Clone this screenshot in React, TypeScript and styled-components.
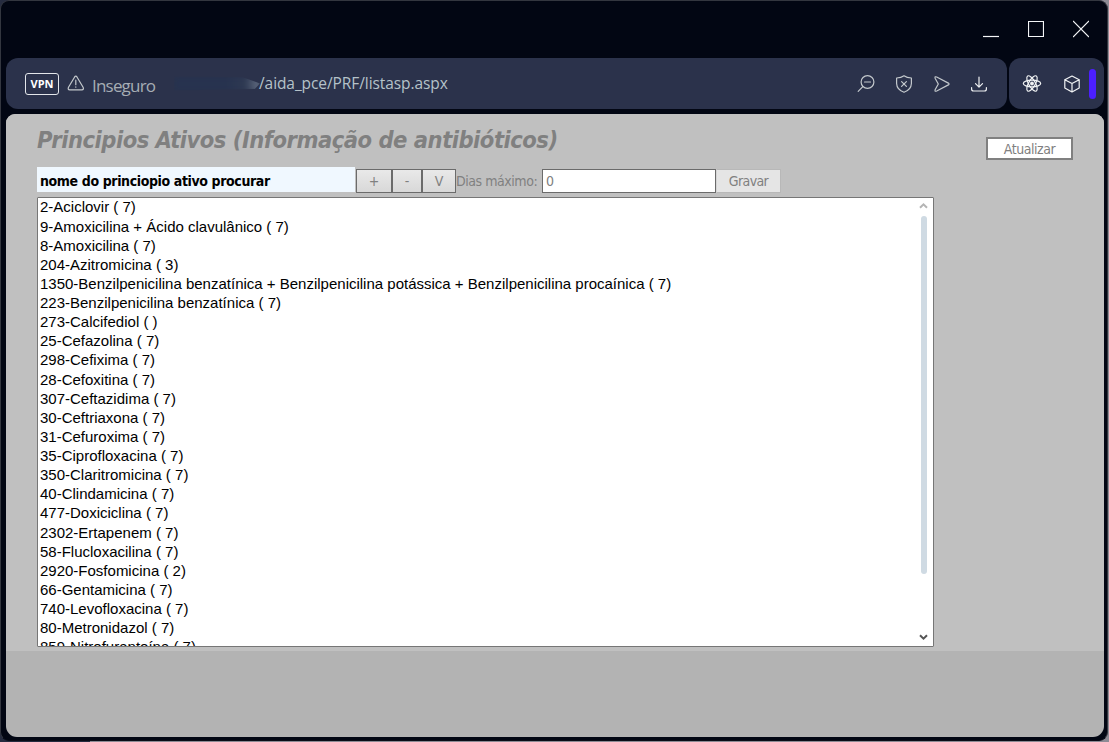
import React from "react";
import styled, { createGlobalStyle } from "styled-components";

const GlobalStyle = createGlobalStyle`
  * { box-sizing: border-box; }
  html, body { margin: 0; padding: 0; height: 100%; overflow: hidden; background: #343743; }
  button, input { font: inherit; margin: 0; border-radius: 0; outline: none; }
`;

const Desktop = styled.div`
  width: 1109px;
  height: 742px;
  padding: 0 1px 1px 0;
  background: linear-gradient(90deg, #262c40 0 90px, #8d8b95 90px);
`;

const Window = styled.div`
  display: flex;
  flex-direction: column;
  width: 1108px;
  height: 741px;
  padding: 0 3px 3px 5px;
  background: #020613;
  border: 1px solid #33363f;
  border-bottom-color: #0a0d18;
  border-radius: 9px;
`;

const TitleBar = styled.header`
  display: flex;
  justify-content: flex-end;
  align-items: center;
  gap: 29px;
  height: 57px;
  padding: 0 15px 2px 0;
  flex: none;
`;

const WindowIcon = styled.svg`
  width: 16px;
  height: 18px;
  fill: none;
  stroke: #f4f5f7;
  stroke-width: 1.2;
`;

const Bars = styled.div`
  display: flex;
  gap: 2px;
  height: 51px;
  margin-bottom: 5px;
  flex: none;
`;

const Bar = styled.div<{ $grow?: boolean }>`
  display: flex;
  align-items: center;
  flex: ${(p) => (p.$grow ? "1" : "0 0 95px")};
  padding: ${(p) => (p.$grow ? "0 18px 0 19px" : "0 8px 0 13px")};
  background: #2b324b;
  border-radius: 12px;
`;

const Vpn = styled.span`
  display: flex;
  align-items: center;
  justify-content: center;
  width: 34px;
  height: 22px;
  border: 1px solid #e3e6ea;
  border-radius: 3px;
  color: #fff;
  font: 700 11px "Open Sans", sans-serif;
`;

const LineIcon = styled.svg<{ $color?: string }>`
  width: 20px;
  height: 20px;
  flex: none;
  fill: none;
  stroke: ${(p) => p.$color ?? "#c3c8cc"};
  stroke-width: 1.2;
  stroke-linecap: round;
  stroke-linejoin: round;
`;

const WarningIcon = styled(LineIcon)`
  margin-left: 7px;
`;

const CubeIcon = styled(LineIcon)`
  margin-left: 20px;
`;

const Insecure = styled.span`
  width: 82px;
  margin-left: 6px;
  padding-top: 4px;
  color: #a6adb4;
  font: 17px/24px "Open Sans", sans-serif;
  letter-spacing: -0.8px;
`;

const HiddenHost = styled.span`
  width: 86px;
  height: 14px;
  margin-right: -1px;
  background: linear-gradient(90deg, #27334f 0 60%, #2e3952 82%, #626d81 100%);
  filter: blur(2px);
  clip-path: polygon(0 0, 80% 5%, 100% 50%, 94% 90%, 0 100%);
`;

const Url = styled.span`
  padding-bottom: 1px;
  color: #b5c2c9;
  font: 15.5px/24px "Open Sans", sans-serif;
  letter-spacing: -0.08px;
`;

const Actions = styled.div`
  display: flex;
  gap: 17.6px;
  margin-left: auto;
`;

const Indicator = styled.i`
  width: 7px;
  height: 30px;
  margin-left: 7px;
  border-radius: 4px;
  background: #4c1fff;
`;

const Page = styled.main`
  display: flex;
  flex-direction: column;
  flex: 1;
  min-height: 0;
  border-radius: 9px 9px 11px 11px;
  overflow: hidden;
  background: #b3b3b3;
  font-family: "DejaVu Sans Condensed", "DejaVu Sans", sans-serif;
  font-stretch: condensed;
`;

const Form = styled.section`
  height: 537px;
  padding: 12px 31px 0;
  background: #c0c0c0;
`;

const Heading = styled.div`
  display: flex;
  justify-content: space-between;
  height: 41px;
`;

const Title = styled.h1`
  margin: 0;
  color: #808080;
  font-size: 23.5px;
  line-height: 28px;
  font-style: italic;
  font-weight: 700;
  letter-spacing: -0.5px;
  white-space: nowrap;
`;

const Refresh = styled.button`
  width: 87px;
  height: 23px;
  margin-top: 11px;
  padding: 0;
  border: 2px solid #808080;
  background: #fff;
  color: #808080;
  font-size: 14px;
  letter-spacing: -0.45px;
`;

const Controls = styled.div`
  display: flex;
  align-items: flex-end;
  height: 26px;
  margin-bottom: 4px;
`;

const Search = styled.input`
  width: 318px;
  height: 25px;
  margin: 0 1px 1px 0;
  padding: 3px 3px 0;
  border: 0;
  background: #f0f8ff;
  color: #000;
  font-size: 14px;
  font-weight: 700;
  letter-spacing: -0.38px;
`;

const Tool = styled.button<{ $width: number }>`
  width: ${(p) => p.$width}px;
  height: 24px;
  padding: 0;
  border: 1px solid #6b6b6b;
  background: linear-gradient(#e9e9e9, #d8d8d8);
  color: #808080;
  font-size: 14px;
`;

const Label = styled.label`
  width: 86px;
  color: #808080;
  font-size: 14px;
  line-height: 23px;
  letter-spacing: -0.45px;
  white-space: nowrap;
`;

const Days = styled.input`
  width: 174px;
  height: 24px;
  padding: 1px 3px;
  border: 1px solid #6b6b6b;
  background: #fff;
  color: #808080;
  font-size: 14px;
`;

const Save = styled.button`
  width: 65px;
  height: 24px;
  padding: 0;
  border: 1px solid #b8b8b8;
  border-left-color: #d5d5d5;
  background: #e5e5e5;
  color: #808080;
  font-size: 14px;
  letter-spacing: -0.6px;
`;

const ListBox = styled.div`
  display: flex;
  justify-content: space-between;
  width: 897px;
  height: 450px;
  border: 1px solid #767676;
  border-radius: 1px;
  background: #fff;
  overflow: hidden;
`;

const Options = styled.ul`
  margin: -0.57px 0 0;
  padding: 0 0 0 2px;
  list-style: none;
  color: #000;
  font: 15px/19.125px "Liberation Sans", Arial, sans-serif;
  white-space: pre;
`;

const Scrollbar = styled.div`
  display: flex;
  flex-direction: column;
  align-items: center;
  width: 18px;
  padding: 4px 1px 5px 0;
`;

const Arrow = styled.svg<{ $color: string }>`
  width: 9px;
  height: 8px;
  flex: none;
  fill: none;
  stroke: ${(p) => p.$color};
  stroke-width: 2;
`;

const Thumb = styled.i`
  width: 6px;
  height: 358px;
  margin: 6px 0 auto 1px;
  border-radius: 3px;
  background: #cfdae3;
`;

const items = [
  "2-Aciclovir ( 7)",
  "9-Amoxicilina + Ácido clavulânico ( 7)",
  "8-Amoxicilina ( 7)",
  "204-Azitromicina ( 3)",
  "1350-Benzilpenicilina benzatínica + Benzilpenicilina potássica + Benzilpenicilina procaínica ( 7)",
  "223-Benzilpenicilina benzatínica ( 7)",
  "273-Calcifediol ( )",
  "25-Cefazolina ( 7)",
  "298-Cefixima ( 7)",
  "28-Cefoxitina ( 7)",
  "307-Ceftazidima ( 7)",
  "30-Ceftriaxona ( 7)",
  "31-Cefuroxima ( 7)",
  "35-Ciprofloxacina ( 7)",
  "350-Claritromicina ( 7)",
  "40-Clindamicina ( 7)",
  "477-Doxiciclina ( 7)",
  "2302-Ertapenem ( 7)",
  "58-Flucloxacilina ( 7)",
  "2920-Fosfomicina ( 2)",
  "66-Gentamicina ( 7)",
  "740-Levofloxacina ( 7)",
  "80-Metronidazol ( 7)",
  "859-Nitrofurantoína ( 7)",
];

export default function App() {
  return (
    <Desktop>
      <GlobalStyle />
      <Window>
        <TitleBar>
          <WindowIcon viewBox="0 0 16 18"><path d="M0 16.5h16" /></WindowIcon>
          <WindowIcon viewBox="0 0 16 18"><path d="M.5 1.5h15v15H.5z" /></WindowIcon>
          <WindowIcon viewBox="0 0 16 18"><path d="M0 1l16 16M16 1L0 17" /></WindowIcon>
        </TitleBar>
        <Bars>
          <Bar $grow>
            <Vpn>VPN</Vpn>
            <WarningIcon viewBox="0 0 20 20">
              <path d="M8.5 3.2Q9.8 1.2 11.1 3.2L17.1 13.3Q18.1 15.7 15.9 15.8H3.7Q1.5 15.7 2.5 13.3ZM9.8 6.2v4.5M9.8 12.9v.3" />
            </WarningIcon>
            <Insecure>Inseguro</Insecure>
            <HiddenHost />
            <Url>/aida_pce/PRF/listasp.aspx</Url>
            <Actions>
              <LineIcon viewBox="0 0 20 20">
                <circle cx="11.5" cy="8" r="6.4" /><path d="M8.5 8h6M6.8 12.7L2.2 17.3" />
              </LineIcon>
              <LineIcon viewBox="0 0 20 20">
                <path d="M10 1.8Q12.8 3.9 17.4 4V9.5Q17.2 15.7 10 18.3Q2.8 15.7 2.6 9.5V4Q7.2 3.9 10 1.8ZM7.6 7.6l4.8 4.8M12.4 7.6l-4.8 4.8" />
              </LineIcon>
              <LineIcon viewBox="0 0 20 20">
                <path d="M4.1 4.2Q3.6 2.1 5.7 3L17.4 9.1Q18.7 10 17.4 10.9L5.7 17Q3.6 17.9 4.1 15.8L7.3 10Z" />
              </LineIcon>
              <LineIcon viewBox="0 0 20 20" $color="#eef0f2">
                <path d="M10 3v10M6.5 9.7L10 13.2l3.5-3.5M2.6 13.5V15Q2.6 17 4.6 17H15.4Q17.4 17 17.4 15V13.5" />
              </LineIcon>
            </Actions>
          </Bar>
          <Bar>
            <LineIcon viewBox="0 0 20 20" $color="#f1f3f4">
              <ellipse cx="10" cy="9.5" rx="8.7" ry="3.3" />
              <ellipse cx="10" cy="9.5" rx="8.7" ry="3.3" transform="rotate(60 10 9.5)" />
              <ellipse cx="10" cy="9.5" rx="8.7" ry="3.3" transform="rotate(120 10 9.5)" />
              <circle cx="10" cy="9.5" r="1.3" fill="#f1f3f4" />
            </LineIcon>
            <CubeIcon viewBox="0 0 20 20" $color="#f1f3f4">
              <path d="M10 2L17.2 5.7V13.9L10 18L2.8 13.9V5.7ZM2.8 5.7L10 9.5L17.2 5.7M10 9.5V18" />
            </CubeIcon>
            <Indicator />
          </Bar>
        </Bars>
        <Page>
          <Form>
            <Heading>
              <Title>Principios Ativos (Informação de antibióticos)</Title>
              <Refresh>Atualizar</Refresh>
            </Heading>
            <Controls>
              <Search defaultValue="nome do princiopio ativo procurar" />
              <Tool $width={36}>+</Tool>
              <Tool $width={30}>-</Tool>
              <Tool $width={34}>V</Tool>
              <Label>Dias máximo:</Label>
              <Days defaultValue="0" />
              <Save>Gravar</Save>
            </Controls>
            <ListBox>
              <Options>
                {items.map((item) => <li key={item}>{item}</li>)}
              </Options>
              <Scrollbar>
                <Arrow viewBox="0 0 9 8" $color="#b5b5b5"><path d="M1 5.8L4.5 2.3L8 5.8" /></Arrow>
                <Thumb />
                <Arrow viewBox="0 0 9 8" $color="#555"><path d="M1 2.2L4.5 5.7L8 2.2" /></Arrow>
              </Scrollbar>
            </ListBox>
          </Form>
        </Page>
      </Window>
    </Desktop>
  );
}
